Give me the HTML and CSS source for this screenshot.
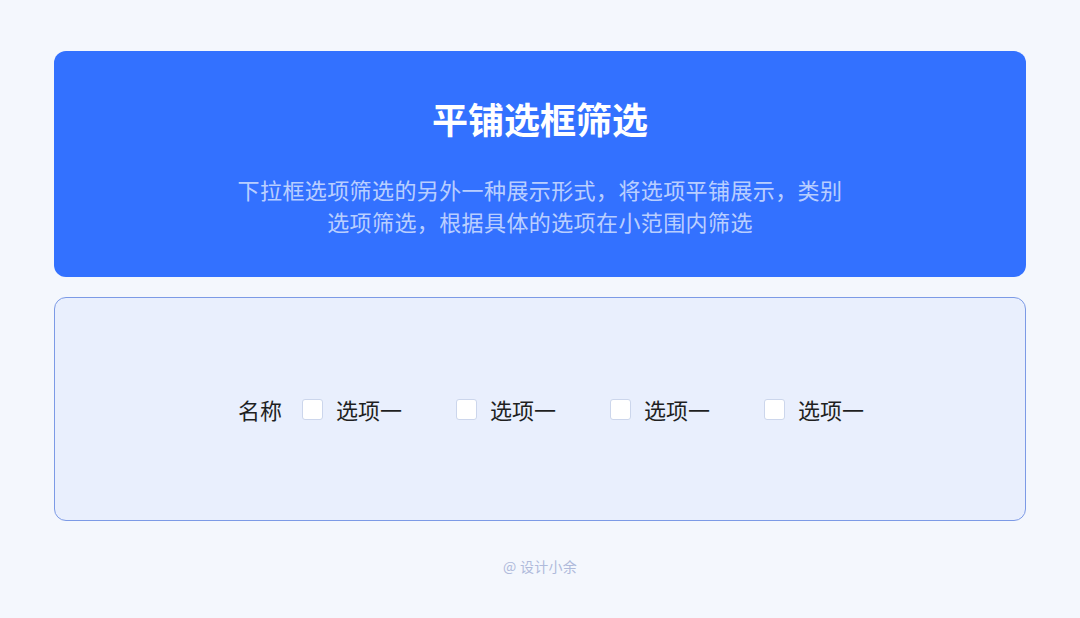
FILE: index.html
```html
<!DOCTYPE html>
<html lang="zh-CN">
<head>
  <meta charset="UTF-8" />
  <meta name="viewport" content="width=device-width, initial-scale=1.0"/>
  <title>平铺选框筛选</title>
  <link rel="stylesheet" href="styles.css">
</head>
<body>
  <div class="page">
    <div class="intro-card">
      <h1>平铺选框筛选</h1>
      <p>下拉框选项筛选的另外一种展示形式，将选项平铺展示，类别<br>选项筛选，根据具体的选项在小范围内筛选</p>
    </div>

    <div class="demo-card">
      <div class="filter-row">
        <span class="filter-label">名称</span>
        <label class="option"><span class="box"></span>选项一</label>
        <label class="option"><span class="box"></span>选项一</label>
        <label class="option"><span class="box"></span>选项一</label>
        <label class="option"><span class="box"></span>选项一</label>
      </div>
    </div>

    <div class="credit">@ 设计小余</div>
  </div>
</body>
</html>
```

FILE: styles.css
```css
* {
  margin: 0;
  padding: 0;
  box-sizing: border-box;
  font-family: "PingFang SC", "Noto Sans CJK SC", "Noto Sans", sans-serif;
}

body {
  background-color: #f4f7fd;
  width: 1080px;
  height: 618px;
  overflow: hidden;
}

.page {
  padding: 51px 54px 0;
  display: flex;
  flex-direction: column;
}

.intro-card {
  background-color: #3371ff;
  border-radius: 12px;
  height: 226px;
  padding-top: 41px;
  text-align: center;
}

.intro-card h1 {
  color: #fff;
  font-size: 36px;
  font-weight: 700;
  line-height: 52px;
}

.intro-card p {
  color: rgba(255, 255, 255, 0.68);
  font-size: 22px;
  letter-spacing: 0.4px;
  line-height: 32px;
  margin-top: 29px;
}

.demo-card {
  margin-top: 20px;
  height: 224px;
  background-color: #e9effd;
  border: 1px solid #7c9ae6;
  border-radius: 12px;
  display: flex;
  align-items: center;
  justify-content: center;
}

.filter-row {
  display: flex;
  align-items: center;
  gap: 54px;
  font-size: 22px;
  color: #1f1f1f;
  margin-left: 22px;
}

.filter-label {
  margin-right: -34px;
}

.option {
  display: flex;
  align-items: center;
  gap: 13px;
}

.box {
  width: 21px;
  height: 21px;
  background-color: #fff;
  border: 1px solid #ccd6ec;
  border-radius: 3px;
}

.credit {
  margin-top: 35px;
  text-align: center;
  font-size: 14px;
  letter-spacing: 0.3px;
  color: #afbadb;
}
```
